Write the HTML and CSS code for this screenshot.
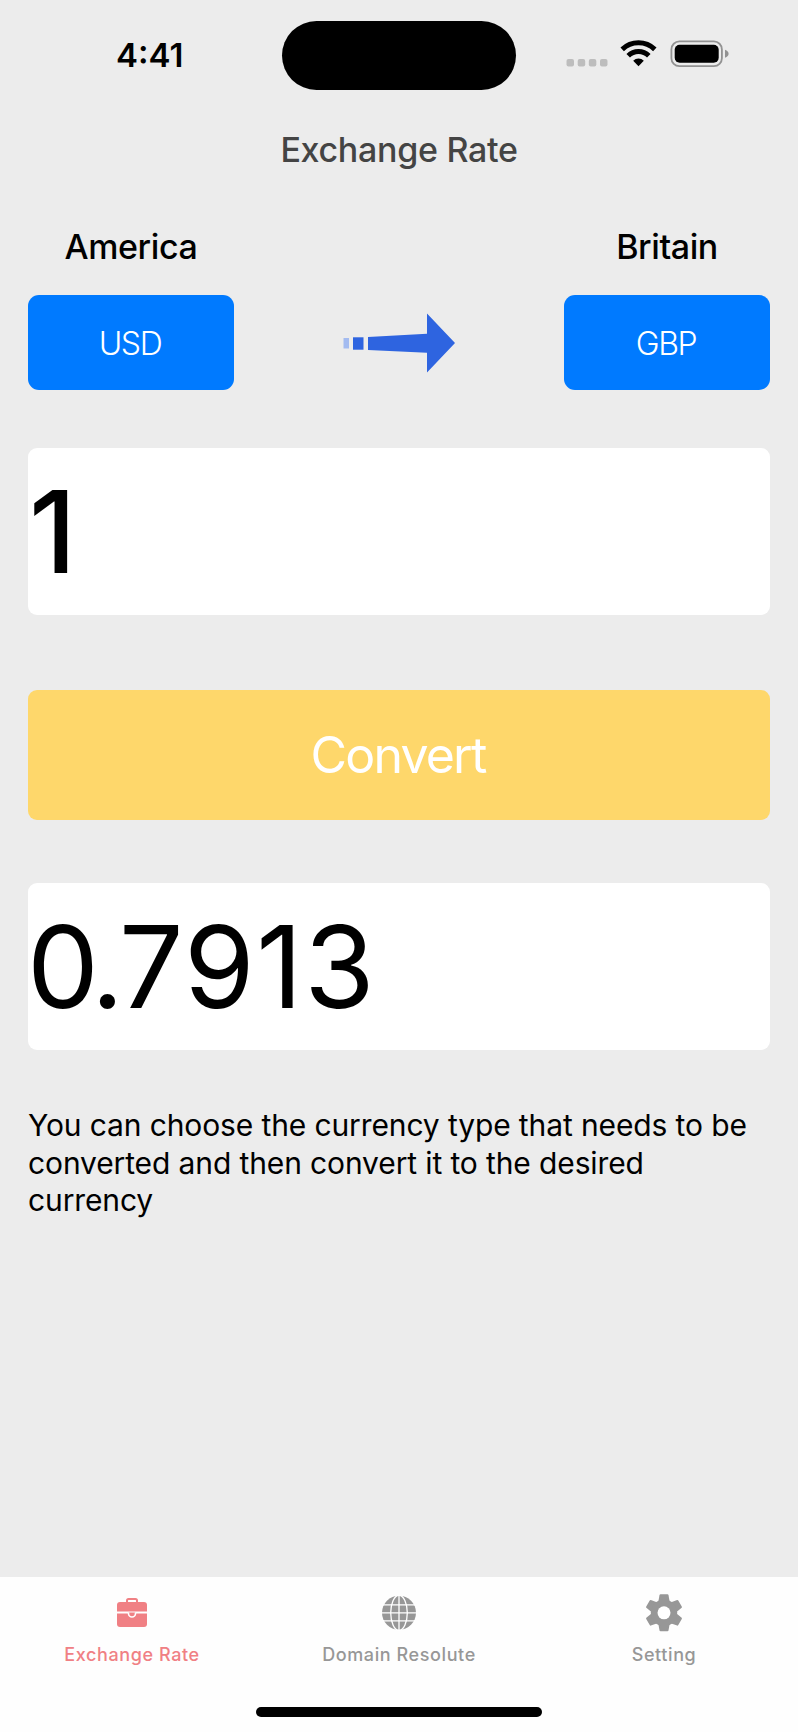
FILE: index.html
```html
<!DOCTYPE html>
<html lang="en">
<head>
    <meta charset="UTF-8">
    <title>Exchange Rate</title>
    <link rel="stylesheet" href="styles.css">
</head>
<body>
    <div class="status-bar">
        <div class="time"><span>4:41</span></div>
        <div class="island"></div>
        <svg class="status-icons" width="170" height="40" viewBox="0 0 170 40">
            <g fill="#bdbdbd">
                <rect x="6.5" y="26" width="7.5" height="7.5" rx="2"/>
                <rect x="17.7" y="26" width="7.5" height="7.5" rx="2"/>
                <rect x="28.8" y="26" width="7.5" height="7.5" rx="2"/>
                <rect x="40" y="26" width="7.5" height="7.5" rx="2"/>
            </g>
            <g fill="none" stroke="#000" stroke-width="5">
                <path d="M62.2 16.4A23.5 23.5 0 0 1 94.8 16.4"/>
                <path d="M68.2 22.8A14.6 14.6 0 0 1 88.8 22.8"/>
            </g>
            <path d="M78.5 33.2L73.2 27.8A7.4 7.4 0 0 1 83.8 27.8Z"/>
            <rect x="111.4" y="8.4" width="50.5" height="24.8" rx="8" fill="none" stroke="#929292" stroke-width="1.8"/>
            <rect x="114.7" y="11.8" width="44" height="17.9" rx="5"/>
            <path d="M165 16.7Q168.6 18 168.6 20.7T165 24.7Z" fill="#929292"/>
        </svg>
    </div>

    <h1>Exchange Rate</h1>

    <div class="container">
        <div class="currencies">
            <div class="currency">
                <div class="country">America</div>
                <button class="code">USD</button>
            </div>
            <svg class="arrow" width="114" height="60" viewBox="0 0 114 60">
                <rect x="1.5" y="25" width="5.5" height="10.5" fill="#a3bbf0"/>
                <g fill="#2e64e0">
                    <rect x="11" y="24.3" width="10.5" height="12.4"/>
                    <path d="M26 24L85 20.7V.5L113 30L85 59.5V39.7L26 37Z"/>
                </g>
            </svg>
            <div class="currency">
                <div class="country">Britain</div>
                <button class="code">GBP</button>
            </div>
        </div>

        <div class="amount from">1</div>
        <button class="convert">Convert</button>
        <div class="amount result"><span class="whole">0.</span>7913</div>

        <p class="hint">You can choose the currency type that needs to be converted and then convert it to the desired currency</p>
    </div>

    <nav class="tabs">
        <div class="tab active">
            <svg width="40" height="40" viewBox="0 0 40 40">
                <path d="M15 8V5.5Q15 4 16.5 4H23.5Q25 4 25 5.5V8" fill="none" stroke="currentColor" stroke-width="2"/>
                <path fill="currentColor" d="M8 7H32Q35 7 35 10V16.5H5V10Q5 7 8 7Z"/>
                <path fill="currentColor" d="M5 18.5H35V29Q35 32 32 32H8Q5 32 5 29Z"/>
                <path d="M16.5 17.5V18.5A3.5 3.5 0 0 0 23.5 18.5V17.5" fill="currentColor" stroke="#fff" stroke-width="1.6"/>
            </svg>
            <span>Exchange Rate</span>
        </div>
        <div class="tab">
            <svg width="40" height="40" viewBox="0 0 40 40">
                <circle cx="20" cy="17.8" r="17" fill="currentColor"/>
                <g fill="none" stroke="#fff" stroke-width="1.3">
                    <path d="M20 0V36M2 17.8H38M4 9.8H36M4 25.8H36"/>
                    <ellipse cx="20" cy="17.8" rx="8.3" ry="17.5"/>
                </g>
            </svg>
            <span>Domain Resolute</span>
        </div>
        <div class="tab">
            <svg width="40" height="40" viewBox="0 0 40 40">
                <defs>
                    <path id="tooth" d="M15.5 0Q15.7 -.7 16.5 -.7H23.5Q24.3 -.7 24.5 0L25.7 7H14.3Z"/>
                </defs>
                <g fill="currentColor">
                    <use href="#tooth"/>
                    <use href="#tooth" transform="rotate(60 20 17.8)"/>
                    <use href="#tooth" transform="rotate(120 20 17.8)"/>
                    <use href="#tooth" transform="rotate(180 20 17.8)"/>
                    <use href="#tooth" transform="rotate(240 20 17.8)"/>
                    <use href="#tooth" transform="rotate(300 20 17.8)"/>
                    <circle cx="20" cy="17.8" r="13.2"/>
                </g>
                <circle cx="20" cy="17.8" r="6.5" fill="#fff"/>
            </svg>
            <span>Setting</span>
        </div>
        <div class="home-indicator"></div>
    </nav>
</body>
</html>
```
FILE: styles.css
```css
* {
    box-sizing: border-box;
}
body {
    margin: 0;
    height: 1732px;
    display: flex;
    flex-direction: column;
    background-color: #ececec;
    font-family: Inter, "Liberation Sans", sans-serif;
    color: #000;
}
button {
    border: none;
    padding: 0;
    font-family: inherit;
    color: white;
    cursor: pointer;
}
.status-bar {
    display: grid;
    grid-template-columns: 282px 234px 282px;
    height: 112px;
    padding-top: 21px;
    align-items: start;
}
.time {
    padding-left: 116px;
    font-size: 33px;
    font-weight: 600;
    line-height: 68px;
}
.island {
    height: 68.5px;
    border-radius: 35px;
    background-color: #000;
}
.status-icons {
    margin: 12px 0 0 44px;
    overflow: visible;
}
h1 {
    margin: 0;
    height: 76px;
    line-height: 76px;
    font-size: 34px;
    font-weight: 500;
    letter-spacing: -0.3px;
    text-align: center;
    color: #444;
}
.container {
    flex: 1;
    padding: 38px 28px 0;
}
.currencies {
    display: flex;
    justify-content: space-between;
    align-items: flex-end;
    height: 164px;
}
.currency {
    width: 206px;
    text-align: center;
}
.country {
    height: 70px;
    line-height: 43px;
    font-size: 34px;
    font-weight: 500;
    letter-spacing: -0.4px;
}
.code {
    display: block;
    width: 206px;
    height: 95px;
    padding: 1px 2px 0 0;
    border-radius: 11px;
    background-color: #007aff;
    font-size: 32px;
    font-weight: 350;
    letter-spacing: -1.4px;
}
.arrow {
    margin-bottom: 17px;
}
.amount {
    height: 167px;
    border-radius: 9px;
    background-color: white;
    font-size: 114px;
    line-height: 167px;
}
.from {
    margin-top: 58px;
    padding-left: 1px;
    font-weight: 550;
}
.result {
    letter-spacing: 1.6px;
    text-indent: -1px;
}
.whole {
    letter-spacing: -5px;
}
.convert {
    display: block;
    width: 100%;
    height: 130px;
    margin: 75px 0 63px;
    padding-right: 2px;
    border-radius: 9px;
    background-color: #fed76b;
    font-size: 50px;
    letter-spacing: -1.8px;
}
.hint {
    margin: 57px 0 0;
    font-size: 30px;
    line-height: 37.5px;
    letter-spacing: -0.12px;
}
.tabs {
    display: grid;
    grid-template-columns: 264px 270px 260px;
    grid-template-rows: 130px 10px;
    height: 155px;
    background-color: #fefefe;
}
.tab {
    display: flex;
    flex-direction: column;
    align-items: center;
    padding-top: 18px;
    color: #979797;
    font-size: 18px;
    font-weight: 500;
    letter-spacing: 0.6px;
}
.tab svg {
    overflow: visible;
}
.tab span {
    margin-top: 9px;
    line-height: 22px;
}
.tab.active {
    color: #f08084;
}
.home-indicator {
    grid-column: 1 / -1;
    width: 286px;
    height: 10px;
    margin-left: 256px;
    border-radius: 5px;
    background-color: #000;
}
```
